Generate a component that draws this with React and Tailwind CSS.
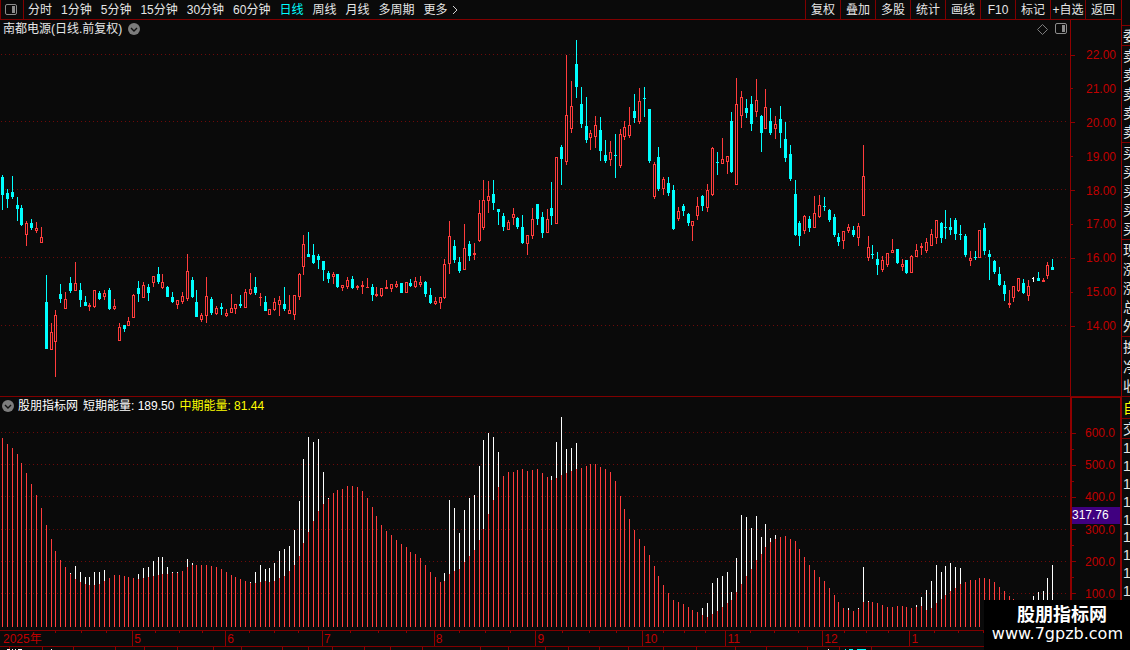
import React, { useState } from 'react';

// one entry per trading day: [direction, high, body top, body bottom, low] in chart units
const candles = [
    [-1, 175, 177, 195, 210], [-1, 189, 193, 199, 208], [-1, 176, 192, 197, 199], [-1, 197, 205, 209, 221],
    [-1, 205, 208, 225, 226], [1, 221, 223, 235, 246], [-1, 219, 223, 228, 230], [1, 222, 228, 231, 233],
    [1, 227, 237, 243, 243], [-1, 275, 302, 349, 349], [1, 323, 332, 350, 350], [1, 310, 315, 342, 377],
    [-1, 284, 294, 299, 303], [1, 292, 299, 309, 309], [-1, 277, 283, 291, 293], [1, 262, 283, 291, 291],
    [-1, 283, 290, 300, 307], [-1, 296, 302, 306, 306], [1, 303, 305, 307, 311], [1, 290, 290, 307, 308],
    [-1, 291, 293, 299, 300], [1, 290, 293, 297, 300], [-1, 288, 290, 309, 310], [1, 299, 306, 309, 310],
    [1, 323, 327, 341, 341], [-1, 325, 325, 329, 332], [1, 317, 321, 326, 326], [1, 294, 295, 318, 318],
    [-1, 281, 288, 294, 302], [1, 282, 285, 298, 298], [-1, 284, 287, 293, 301], [1, 276, 276, 283, 287],
    [-1, 267, 274, 282, 284], [1, 274, 282, 288, 289], [-1, 286, 287, 297, 297], [-1, 292, 297, 302, 303],
    [1, 300, 300, 305, 309], [1, 292, 296, 302, 304], [1, 254, 271, 299, 301], [-1, 277, 280, 297, 298],
    [-1, 290, 302, 317, 317], [1, 313, 315, 320, 322], [1, 277, 296, 316, 323], [-1, 297, 299, 313, 315],
    [1, 306, 308, 314, 315], [-1, 303, 307, 309, 315], [1, 309, 313, 316, 317], [1, 294, 308, 313, 313],
    [1, 304, 304, 309, 314], [-1, 295, 304, 306, 308], [1, 289, 292, 308, 308], [1, 273, 289, 294, 295],
    [-1, 277, 287, 293, 295], [1, 293, 297, 298, 306], [-1, 296, 302, 311, 311], [1, 309, 309, 315, 315],
    [1, 298, 302, 310, 311], [1, 296, 300, 305, 316], [-1, 287, 304, 309, 311], [1, 295, 310, 314, 314],
    [1, 295, 295, 315, 320], [1, 273, 274, 297, 300], [1, 235, 244, 267, 275], [-1, 232, 254, 257, 257],
    [-1, 244, 255, 263, 264], [-1, 254, 256, 260, 269], [-1, 261, 261, 270, 281], [-1, 271, 273, 279, 283],
    [1, 272, 274, 277, 284], [-1, 274, 274, 287, 288], [1, 285, 285, 288, 291], [1, 277, 280, 287, 289],
    [-1, 276, 279, 288, 289], [1, 285, 286, 288, 290], [1, 281, 285, 287, 294], [1, 278, 287, 288, 288],
    [-1, 284, 287, 295, 301], [1, 287, 294, 296, 297], [1, 288, 288, 296, 297], [1, 280, 287, 289, 289],
    [1, 284, 284, 289, 292], [1, 281, 284, 287, 288], [-1, 283, 283, 293, 293], [1, 282, 282, 293, 293],
    [-1, 279, 283, 286, 287], [1, 277, 281, 287, 288], [1, 276, 282, 285, 287], [-1, 281, 282, 294, 297],
    [-1, 288, 295, 303, 304], [1, 297, 301, 304, 305], [1, 297, 297, 303, 309], [1, 259, 264, 298, 299],
    [1, 221, 236, 264, 274], [-1, 240, 246, 260, 263], [-1, 257, 262, 271, 273], [1, 224, 248, 270, 270],
    [-1, 241, 244, 256, 261], [1, 243, 253, 255, 260], [1, 200, 213, 241, 242], [1, 180, 200, 228, 230],
    [1, 181, 196, 201, 213], [-1, 180, 194, 203, 210], [-1, 209, 209, 212, 225], [-1, 213, 216, 227, 231],
    [1, 220, 222, 230, 230], [1, 208, 214, 218, 225], [-1, 217, 218, 227, 229], [-1, 215, 227, 243, 244],
    [1, 235, 235, 244, 255], [1, 208, 219, 236, 239], [-1, 204, 204, 219, 225], [-1, 212, 217, 233, 238],
    [1, 209, 219, 233, 233], [-1, 182, 208, 216, 225], [1, 157, 157, 224, 224], [-1, 145, 147, 159, 185],
    [1, 55, 115, 162, 165], [1, 81, 106, 129, 133], [-1, 40, 64, 87, 98], [-1, 87, 104, 124, 128],
    [-1, 97, 126, 140, 143], [1, 130, 133, 138, 150], [1, 116, 125, 137, 148], [-1, 117, 130, 151, 161],
    [-1, 140, 155, 161, 163], [1, 141, 152, 160, 166], [-1, 134, 155, 156, 178], [1, 129, 134, 166, 168],
    [1, 121, 127, 137, 140], [1, 107, 125, 136, 138], [-1, 94, 111, 118, 123], [1, 88, 101, 122, 124],
    [-1, 87, 98, 99, 117], [-1, 109, 109, 161, 163], [1, 162, 164, 197, 199], [-1, 147, 157, 189, 191],
    [1, 177, 179, 189, 195], [-1, 177, 183, 193, 196], [-1, 185, 190, 229, 230], [1, 207, 211, 219, 221],
    [-1, 204, 206, 211, 216], [-1, 213, 214, 223, 226], [1, 221, 221, 226, 241], [1, 197, 206, 216, 220],
    [-1, 195, 196, 206, 211], [1, 184, 190, 208, 212], [1, 147, 148, 195, 196], [-1, 152, 162, 163, 175],
    [1, 138, 159, 164, 164], [1, 156, 156, 162, 174], [-1, 112, 121, 172, 173], [1, 78, 104, 185, 185],
    [1, 91, 97, 116, 128], [-1, 99, 108, 113, 118], [-1, 96, 104, 124, 131], [1, 79, 100, 112, 117],
    [-1, 115, 116, 133, 152], [1, 89, 107, 129, 129], [-1, 108, 121, 133, 135], [1, 116, 124, 129, 139],
    [-1, 106, 119, 133, 148], [-1, 122, 139, 158, 162], [-1, 145, 154, 179, 181], [-1, 180, 194, 235, 236],
    [-1, 221, 223, 236, 246], [1, 215, 216, 231, 234], [-1, 216, 219, 228, 232], [1, 196, 213, 228, 228],
    [1, 195, 205, 217, 218], [-1, 197, 206, 207, 211], [-1, 209, 210, 220, 222], [-1, 214, 217, 235, 237],
    [-1, 233, 237, 242, 246], [1, 231, 231, 241, 249], [1, 224, 227, 231, 233], [-1, 226, 230, 235, 237],
    [1, 223, 226, 238, 246], [1, 145, 176, 216, 216], [1, 236, 247, 258, 261], [-1, 245, 254, 255, 259],
    [-1, 252, 259, 265, 275], [1, 256, 260, 270, 272], [1, 253, 253, 265, 267], [1, 239, 250, 253, 253],
    [-1, 249, 249, 263, 264], [1, 259, 264, 267, 271], [-1, 260, 260, 273, 274], [1, 255, 256, 273, 273],
    [1, 244, 250, 257, 257], [1, 243, 246, 248, 255], [1, 238, 242, 251, 253], [1, 229, 234, 246, 246],
    [1, 220, 220, 238, 244], [-1, 222, 223, 238, 243], [-1, 210, 227, 228, 239], [-1, 218, 227, 230, 235],
    [-1, 218, 220, 234, 240], [-1, 225, 234, 235, 240], [-1, 234, 236, 255, 257], [1, 251, 258, 261, 266],
    [-1, 251, 257, 258, 260], [1, 230, 230, 258, 258], [-1, 223, 228, 251, 255], [-1, 250, 254, 257, 280],
    [-1, 260, 261, 272, 274], [-1, 267, 274, 285, 286], [-1, 281, 285, 294, 301], [1, 290, 303, 305, 308],
    [1, 286, 286, 298, 302], [1, 278, 278, 291, 292], [-1, 279, 283, 293, 294], [1, 280, 286, 296, 301],
    [0, 277, 278, 279, 282], [-1, 272, 278, 281, 281], [1, 278, 280, 282, 282], [1, 262, 265, 276, 279],
    [-1, 259, 267, 270, 270],
];

// top of the mid-term (red) bar for each day
const midTerm = [
    438, 444, 448, 454, 463, 473, 484, 495, 508, 525, 539, 551, 560, 567, 574, 579, 582, 584, 585, 585,
    584, 581, 578, 575, 575, 576, 577, 578, 579, 578, 577, 576, 575, 574, 574, 573, 573, 571, 567, 565,
    565, 565, 565, 566, 567, 569, 572, 575, 577, 579, 581, 583, 583, 582, 581, 582, 581, 578, 576, 571,
    565, 556, 543, 532, 521, 511, 504, 499, 493, 490, 489, 486, 486, 487, 491, 498, 507, 516, 525, 531,
    535, 540, 544, 547, 552, 554, 558, 565, 572, 577, 582, 581, 574, 571, 569, 562, 556, 550, 540, 529,
    514, 500, 487, 476, 472, 472, 470, 469, 471, 470, 469, 473, 477, 480, 478, 475, 473, 471, 469, 468,
    466, 464, 464, 467, 469, 472, 481, 496, 509, 519, 530, 539, 546, 555, 566, 576, 585, 593, 600, 602,
    604, 607, 610, 612, 615, 617, 614, 611, 607, 603, 600, 592, 584, 576, 569, 560, 554, 547, 542, 539,
    537, 536, 539, 541, 549, 557, 565, 570, 577, 581, 588, 595, 602, 608, 610, 611, 609, 602, 602, 602,
    603, 605, 607, 607, 606, 606, 607, 608, 607, 606, 610, 608, 603, 599, 595, 591, 588, 584, 582, 580,
    580, 578, 578, 579, 582, 587, 591, 596, 599, 602, 604, 606, 607, 607, 606, 604, 601,
];

// the short-term (white) bar shows only where it rises above the mid-term one
const shortTerm = {
    14: 573, 15: 566, 16: 572, 17: 577, 18: 577, 19: 572, 20: 572, 21: 570, 28: 574, 29: 568,
    30: 567, 31: 561, 32: 557, 33: 557, 34: 567, 35: 572, 36: 572, 38: 559, 39: 563, 51: 582,
    52: 572, 53: 565, 54: 569, 55: 568, 56: 563, 57: 551, 58: 549, 59: 546, 60: 530, 61: 501,
    62: 459, 63: 437, 64: 442, 65: 439, 66: 472, 67: 498, 91: 573, 92: 500, 93: 508, 94: 533,
    95: 510, 96: 498, 97: 495, 98: 466, 99: 440, 100: 433, 101: 437, 102: 452, 113: 476, 114: 442,
    115: 417, 116: 449, 117: 448, 118: 443, 144: 608, 145: 603, 146: 583, 147: 578, 148: 576, 149: 572,
    150: 592, 151: 558, 152: 515, 153: 517, 154: 528, 155: 516, 156: 537, 157: 524, 158: 538, 159: 535,
    174: 608, 176: 608, 177: 567, 178: 601, 188: 605, 189: 597, 190: 590, 191: 581, 192: 565, 193: 572,
    194: 566, 195: 563, 196: 567, 197: 568, 212: 596, 213: 592, 214: 591, 215: 578, 216: 565,
};

const periods = ['分时', '1分钟', '5分钟', '15分钟', '30分钟', '60分钟', '日线', '周线', '月线', '多周期'];
const tools = ['复权', '叠加', '多股', '统计', '画线', 'F10', '标记', '+自选', '返回'];
const prices = ['22.00', '21.00', '20.00', '19.00', '18.00', '17.00', '16.00', '15.00', '14.00'];
const levels = ['600.0', '', '500.0', '', '400.0', '', '300.0', '', '200.0', '', '100.0'];

const months = [
    { label: '2025年', span: 132 },
    { label: '5', span: 93 },
    { label: '6', span: 97 },
    { label: '7', span: 112 },
    { label: '8', span: 102 },
    { label: '9', span: 107 },
    { label: '10', span: 83 },
    { label: '11', span: 97 },
    { label: '12', span: 87 },
    { label: '1', span: 98 },
    { label: '', span: 62 },
];

const footerMarks = [9, 42, 73, 115, 144, 177, 213, 241, 282, 308, 332, 364, 390, 422, 480, 508, 545, 568, 599, 628, 663, 696, 735, 766, 807, 839, 871];

const dayX = (i) => Math.round(1.95 + i * 4.863);

const candleColor = { '1': '#ff3c3c', '-1': '#00ffff', '0': '#ffffff' };

const GridLines = ({ rows }) => rows.map(y => (
    <line key={y} x1="1" x2="1067" y1={y + 0.5} y2={y + 0.5} stroke="#6e0a0a" strokeDasharray="1 3" />
));

const CandleChart = () => (
    <svg viewBox="0 38 1070 358" preserveAspectRatio="none" shapeRendering="crispEdges" className="block w-full h-[358px]">
        <GridLines rows={[54, 121, 189, 257, 325]} />
        {candles.map(([dir, high, top, bottom, low], i) => {
            const x = dayX(i);
            return (
                <g key={i} fill={candleColor[dir]}>
                    <rect x={x} y={high} width="1" height={low - high} />
                    <rect x={x - 1} y={top} width={dir === 0 ? 1 : 3} height={bottom - top} />
                    {dir === 1 && bottom - top > 2 && (
                        <rect x={x} y={top + 1} width="1" height={bottom - top - 2} fill="#0a0a0a" />
                    )}
                </g>
            );
        })}
    </svg>
);

const EnergyChart = () => (
    <svg viewBox="0 414 1070 216" preserveAspectRatio="none" shapeRendering="crispEdges" className="block w-full h-[216px]">
        <GridLines rows={[432, 464, 496, 529, 561, 593]} />
        {midTerm.map((top, i) => (
            <g key={i}>
                {shortTerm[i] && <rect x={dayX(i)} y={shortTerm[i]} width="1" height={top - shortTerm[i]} fill="#ffffff" />}
                <rect x={dayX(i)} y={top} width="1" height={627 - top} fill="#ff3c3c" />
            </g>
        ))}
    </svg>
);

const PanelIcon = () => (
    <svg width="12" height="12" viewBox="0 0 12 12" fill="none">
        <rect x="0.5" y="0.5" width="11" height="10" rx="1.5" stroke="#8c8c8c" />
        <rect x="7" y="2" width="3" height="7" fill="#8c8c8c" />
    </svg>
);

const RoundArrow = () => (
    <svg width="12" height="12" viewBox="0 0 12 12" fill="none">
        <circle cx="6" cy="6" r="6" fill="#7c7c7c" />
        <path d="M3 5l3 3 3-3" stroke="#111111" strokeWidth="1.4" />
    </svg>
);

const AxisRow = ({ label, long }) => (
    <div className="flex h-4 shrink-0 items-center justify-between pr-[5px]">
        <span className={long ? 'h-px w-1 bg-[#900000]' : 'h-px w-0.5 bg-[#900000]'} />
        <span>{label}</span>
    </div>
);

const SideGroup = ({ chars, className }) => (
    <div className={`flex shrink-0 flex-col border-b border-[#800000] ${className}`}>
        {chars.map((c, i) => (
            <span key={i} className="flex flex-1 items-center pl-px text-[14px] leading-none">{c}</span>
        ))}
    </div>
);

const App = () => {
    const [period, setPeriod] = useState('日线');

    return (
        <div className="relative flex h-screen overflow-hidden bg-[#0a0a0a] font-['Liberation_Sans','Noto_Sans_CJK_SC',sans-serif] text-[12px] leading-4 text-[#e6e6e6]">
            <div className="flex min-w-0 flex-1 flex-col">
                {/* Toolbar */}
                <header className="flex h-5 shrink-0 items-stretch justify-between overflow-hidden whitespace-nowrap border-b border-l border-[#800000]">
                    <nav className="flex items-center gap-1">
                        <button type="button" aria-label="侧栏" className="flex h-full w-[23px] items-center border-r border-[#800000] pl-1">
                            <PanelIcon />
                        </button>
                        <div className="flex items-center gap-[9px]">
                            {periods.map(p => (
                                <button
                                    key={p}
                                    type="button"
                                    onClick={() => setPeriod(p)}
                                    className={p === period ? 'text-[#00ffff]' : ''}
                                >
                                    {p}
                                </button>
                            ))}
                            <button type="button" className="flex items-center gap-1">
                                更多
                                <svg width="6" height="10" viewBox="0 0 6 10" fill="none">
                                    <path d="M1 1l4 4-4 4" stroke="#d0d0d0" />
                                </svg>
                            </button>
                        </div>
                    </nav>
                    <div className="flex pr-px">
                        {tools.map(t => (
                            <button key={t} type="button" className="w-[35px] border-l border-[#800000] text-center">{t}</button>
                        ))}
                    </div>
                </header>

                {/* Candles */}
                <section className="flex shrink-0">
                    <div className="min-w-0 flex-1">
                        <div className="flex h-[18px] items-center justify-between pl-[3px] pr-[3px]">
                            <h1 className="flex items-center gap-1.5">
                                南都电源(日线.前复权)
                                <RoundArrow />
                            </h1>
                            <div className="flex items-center gap-[7px]">
                                <svg width="11" height="11" viewBox="0 0 11 11" fill="none">
                                    <path d="M5.5 0.5l5 5-5 5-5-5z" stroke="#7c7c7c" />
                                </svg>
                                <PanelIcon />
                            </div>
                        </div>
                        <CandleChart />
                    </div>
                    <div className="w-[51px] border-l border-[#900000] pt-[27px] text-[#c00000]">
                        <div className="flex h-[287px] flex-col justify-between">
                            {prices.map((p, i) => <AxisRow key={p} label={p} long={i % 2 === 0} />)}
                        </div>
                    </div>
                </section>

                {/* Indicator */}
                <section className="flex shrink-0 border-t border-[#800000]">
                    <div className="min-w-0 flex-1">
                        <div className="flex h-[17px] items-center gap-[5px] pl-0.5 text-white">
                            <span className="flex items-center gap-1">
                                <RoundArrow />
                                股朋指标网
                            </span>
                            <span>短期能量: 189.50</span>
                            <span className="text-[#ffff00]">中期能量: 81.44</span>
                        </div>
                        <EnergyChart />
                    </div>
                    <div className="relative w-[51px] border-l-2 border-r border-t border-[#900000] pt-[27px] text-[#c00000]">
                        <div className="flex h-[177px] flex-col justify-between">
                            {levels.map((l, i) => <AxisRow key={i} label={l} long={l !== ''} />)}
                        </div>
                        <span className="absolute inset-x-0 top-[109px] h-[17px] bg-[#400080] leading-[17px] text-white">317.76</span>
                    </div>
                </section>

                {/* Time axis */}
                <div className="flex h-4 shrink-0 border-t border-[#800000] pr-[51px] text-[#c00000]">
                    {months.map((m, i) => (
                        <div
                            key={i}
                            style={{ flexGrow: m.span }}
                            className={i === 0 ? 'relative min-w-0 basis-0 pl-[3px]' : 'relative min-w-0 basis-0 border-l border-[#900000] pl-px'}
                        >
                            <span className={i === 0 ? 'absolute inset-0 flex justify-evenly pl-[30px]' : 'absolute inset-0 flex justify-evenly'}>
                                <i className="h-0.5 w-px bg-[#900000]" />
                                <i className="h-0.5 w-px bg-[#900000]" />
                                <i className="h-0.5 w-px bg-[#900000]" />
                            </span>
                            {m.label}
                        </div>
                    ))}
                </div>
                <div className="flex-1 border-t border-[#800000]">
                    <svg viewBox="0 0 1121 3" preserveAspectRatio="none" shapeRendering="crispEdges" className="block h-[3px] w-full">
                        {footerMarks.map(x => <rect key={x} x={x} y="0" width="1" height="3" fill="#900000" />)}
                        <path d="M7 2h3v1H7zM12 2h1v1h-1zM15 2h1v1h-1zM18 2h4v1h-4zM51 2h1v1h-1zM828 2h1v1h-1z" fill="#ffffff" />
                        <path d="M845 2h1v1h-1zM849 2h4v1h-4zM857 2h9v1h-9z" fill="#00ffff" />
                    </svg>
                </div>
            </div>

            {/* Quote strip */}
            <aside className="flex w-[9px] flex-col overflow-hidden border-l border-[#900000]">
                <SideGroup chars={['']} className="h-[26px]" />
                <SideGroup chars={['委']} className="h-5" />
                <SideGroup chars={['卖', '卖', '卖', '卖', '卖']} className="h-[97px]" />
                <SideGroup chars={['买', '买', '买', '买', '买']} className="h-[97px]" />
                <SideGroup chars={['现', '涨', '涨', '总', '外']} className="h-[97px]" />
                <SideGroup chars={['换', '净', '收']} className="h-[60px]" />
                <SideGroup chars={['自']} className="h-[22px] text-[#ffff00]" />
                <SideGroup chars={['交']} className="h-5" />
                <SideGroup chars={['1', '1', '1', '1', '1', '1', '1', '1', '1']} className="h-[162px]" />
            </aside>

            <div className="absolute bottom-0 right-0 flex h-[50px] w-[146px] flex-col items-end bg-black pr-[7px] pt-[5px] text-white">
                <strong className="pr-4 text-[18px] font-bold leading-[20px]">股朋指标网</strong>
                <span className="font-['DejaVu_Sans',sans-serif] text-[16px] leading-[18px]">www.7gpzb.com</span>
            </div>
        </div>
    );
};

export default App;
